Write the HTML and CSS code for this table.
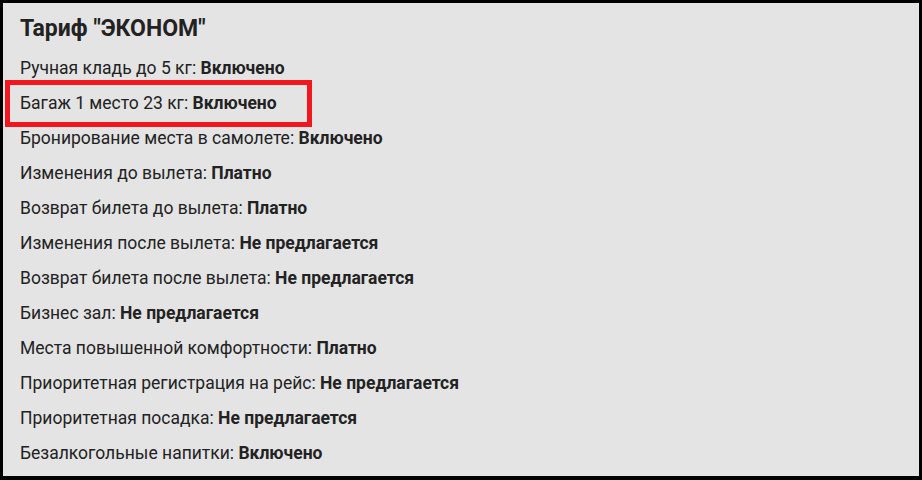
FILE: index.html
```html
<!DOCTYPE html>
<html lang="ru">
<head>
<meta charset="utf-8">
<title>Тариф ЭКОНОМ</title>
<link rel="stylesheet" href="styles.css">
</head>
<body>
<div class="panel">
  <h2 class="title">Тариф "ЭКОНОМ"</h2>
  <ul class="list">
    <li class="row">Ручная кладь до 5 кг: <b>Включено</b></li>
    <li class="row row--marked">Багаж 1 место 23 кг: <b>Включено</b></li>
    <li class="row">Бронирование места в самолете: <b>Включено</b></li>
    <li class="row">Изменения до вылета: <b>Платно</b></li>
    <li class="row">Возврат билета до вылета: <b>Платно</b></li>
    <li class="row">Изменения после вылета: <b>Не предлагается</b></li>
    <li class="row">Возврат билета после вылета: <b>Не предлагается</b></li>
    <li class="row">Бизнес зал: <b>Не предлагается</b></li>
    <li class="row">Места повышенной комфортности: <b>Платно</b></li>
    <li class="row">Приоритетная регистрация на рейс: <b>Не предлагается</b></li>
    <li class="row">Приоритетная посадка: <b>Не предлагается</b></li>
    <li class="row">Безалкогольные напитки: <b>Включено</b></li>
  </ul>
</div>
</body>
</html>
```
FILE: styles.css
```css
*, *::before, *::after { box-sizing: border-box; }
html, body {
  margin: 0;
  padding: 0;
  background: #000;
}
body {
  width: 922px;
  height: 480px;
  font-family: Roboto, "Noto Sans", sans-serif;
  color: #222;
}
.panel {
  width: 922px;
  height: 480px;
  border-style: solid;
  border-color: #000;
  border-width: 3px 3px 4px 3px;
  background: #e4e4e4;
  padding: 8px 0 0 17px;
}
.title {
  margin: 0 0 4.5px 0;
  font-size: 23px;
  line-height: 35px;
  font-weight: 700;
}
.list {
  list-style: none;
  margin: 0;
  padding: 0;
}
.row {
  font-size: 17.5px;
  line-height: 35px;
  height: 35px;
  white-space: nowrap;
}
.row b { font-weight: 700; }
.row--marked { position: relative; }
.row--marked::after {
  content: "";
  position: absolute;
  left: -15px;
  top: -5.5px;
  width: 307px;
  height: 47px;
  border: 5px solid #f2161e;
}
```
